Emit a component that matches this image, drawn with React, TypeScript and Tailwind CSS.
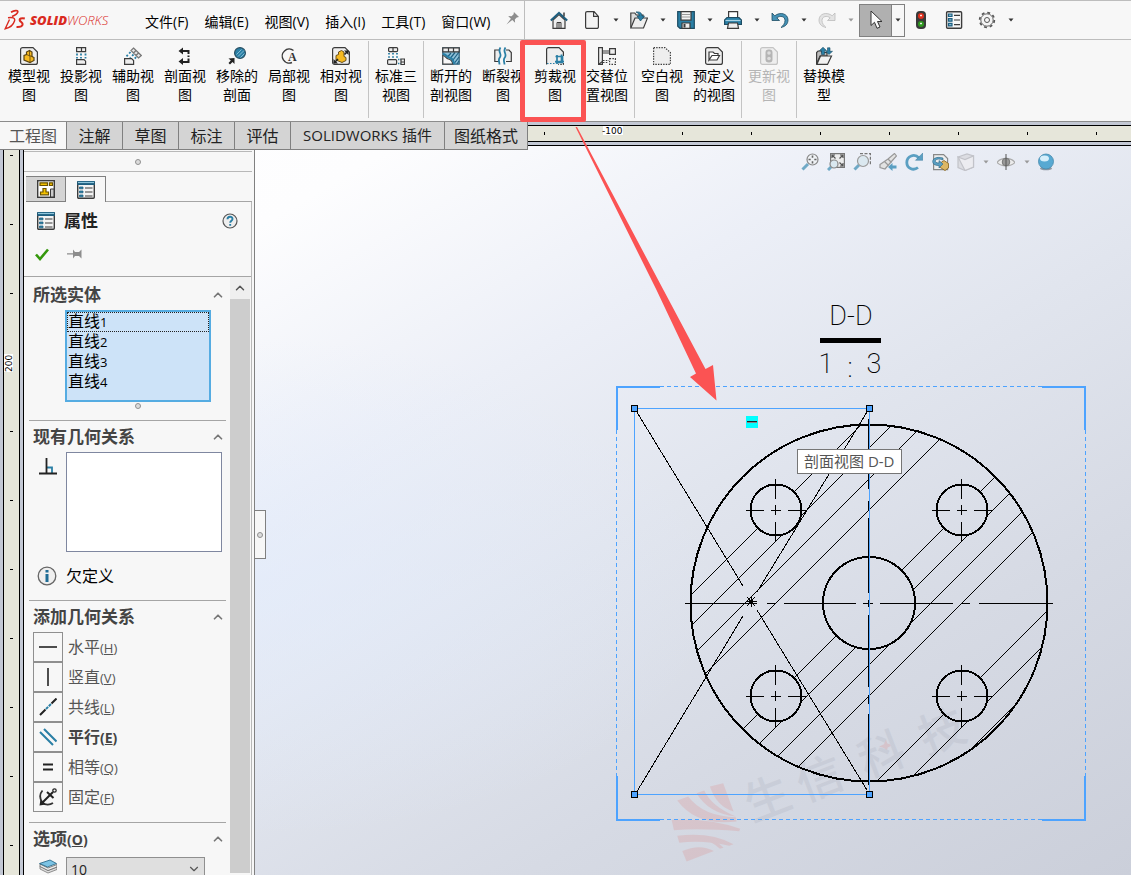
import { useState } from "react";
import type { ReactNode } from "react";
import clsx from "clsx";
import { ChevronUp, ChevronDown } from "lucide-react";

const DARK = "#3b3b3b";
const BLUE = "#2a7fa5";
const SELECT = "#4da3ff";

type IconProps = { children: ReactNode; size?: number };

function Icon({ children, size = 18 }: IconProps) {
  return (
    <svg
      width={size}
      height={size}
      viewBox="0 0 18 18"
      fill="none"
      stroke={DARK}
      strokeWidth="1.2"
      aria-hidden="true"
      className="shrink-0"
    >
      {children}
    </svg>
  );
}

const PAGE = "M.6 2.6a2 2 0 0 1 2-2H13l4.4 4.4v10.4a2 2 0 0 1-2 2H2.6a2 2 0 0 1-2-2z";
const PART = "M4 8.5V13l6 2.5 4-2v-3l-2-1V5L9.500 3.5 6.500 5v2.500z";

/* ---------- ribbon icons ---------- */

const ModelViewIcon = () => (
  <Icon>
    <path d={PAGE} fill="#eee" />
    <path d={PART} fill="#f5b921" stroke="#5b4310" />
    <path d="M9.500 3.500v5l3 1.200M6.500 7.500 10 9v6" stroke="#5b4310" strokeWidth=".8" />
  </Icon>
);

const ProjectedIcon = () => (
  <Icon>
    <path d="M4.600.6h9v4h-9zM9.500.6v4" fill="#eee" />
    <path d="M5 6.500v5M9 6.500v5M13.500 6.500v5" stroke={BLUE} strokeWidth="1.800" strokeDasharray="2 1.500" />
    <path d="M4.600 12.600h7.400l1.600 1.600v3.200h-9z" fill="#eee" />
  </Icon>
);

const AuxiliaryIcon = () => (
  <Icon>
    <path d="M9.500 1 17.300 8.500 14.500 11 7 3.500zM12 3.500 9.500 6M14.500 6 12 8.500" fill="#e6e6e6" stroke="#777" />
    <path d="M6.500 5 2 10M9.500 7.500 6 11M12 10l-1.500 2" stroke={BLUE} strokeWidth="1.800" strokeDasharray="2 2" />
    <path d="M.6 11.600h7l2 2v3.800h-9z" fill="#eee" />
  </Icon>
);

const SectionIcon = () => (
  <Icon>
    <path d="M5 4h7.500v3M12.500 8.500v1.500M12.500 11.500V15H5" stroke="#222" strokeWidth="2" />
    <path d="M7 .5V7.500L2.500 4zM7 11v7l-4.500-3.500z" fill="#222" stroke="none" />
  </Icon>
);

const RemovedSectionIcon = () => (
  <Icon>
    <circle cx="12" cy="6" r="5.400" fill={BLUE} stroke="#274d60" />
    <path d="m8.500 7.500 5-5M10 9.500l6-6M12.500 10.500l4-4" stroke="#9ccbe0" strokeWidth=".8" />
    <path d="M.5 11.500 6.500 11v6L4.500 15 2 17.500.5 16l2.300-2.500z" fill="#222" stroke="none" />
  </Icon>
);

const DetailIcon = () => (
  <Icon>
    <path d="M13.500 3.500A7 7 0 1 0 12 15.500" strokeWidth="1.400" />
    <text x="8" y="14" fontSize="12" fontFamily="Liberation Serif" fontWeight="700" fill="#333" stroke="none">A</text>
  </Icon>
);

const RelativeIcon = () => (
  <Icon>
    <path d={PAGE} fill="#eee" />
    <path d={PART} fill="#f5b921" stroke="#5b4310" strokeWidth=".9" />
    <path d="m2 16 4-4M12.500 7.500 16 4" stroke="#222" strokeWidth="1.500" />
    <path d="M1.500 12v4.500H6zM16.500 8V3.500H12z" fill="#222" stroke="none" />
  </Icon>
);

const StandardViewsIcon = () => (
  <Icon>
    <rect x="1.600" y=".6" width="9" height="4" rx="1" fill="#eee" />
    <path d="M6 .6v4" />
    <path d="M2 6v5M6 6v5M10 6v5" stroke={BLUE} strokeWidth="1.800" strokeDasharray="1.600 1.600" />
    <rect x=".6" y="12.600" width="9" height="4.800" rx="1" fill="#eee" />
    <path d="M11 12.500h3M11 16.500h3" stroke={BLUE} strokeWidth="1.600" strokeDasharray="1.400 1" />
    <path d="M14 12h3.500v5.500H14zM14 15h3.500" fill="#eee" />
  </Icon>
);

const BrokenOutIcon = () => (
  <Icon>
    <path d="M.8.8h16.400v16.400H.8z" fill="#8fc2da" stroke="#2b5f7a" />
    <path d="M9 6 6 9.500M13 5.500 8.500 11M17 5 11 13M17 10l-4.500 6M17 14l-2 3" stroke="#1f5f80" />
    <path d="M.8.8h16.400v4H.8zM6.500.8v4M11.500.8v4" fill="#eee" />
    <path d="M.8 8.500c3 0 3 3 5.500 3.500s4 1.500 4.500 5.200H.8z" fill="#f7f7f7" stroke="#444" />
    <path d="M1 7c3 0 3.500 3 6 3.500s4.500 2 5 6.500" stroke={BLUE} strokeWidth="2" />
  </Icon>
);

const BreakIcon = () => (
  <Icon>
    <path d="M5 3H.8v11.500H5M12 3h3l2.300 2.500v9H12" fill="#eee" />
    <path d="M6.500.5C3 5 9 7 5.500 11c-1.500 2.500 0 4 0 6.500M11.500.5C8 5 14 7 10.500 11c-1.500 2.500 0 4 0 6.500" stroke={BLUE} strokeWidth="1.800" />
  </Icon>
);

const CropIcon = () => (
  <Icon>
    <path d="M.6 17.400V2.600a2 2 0 0 1 2-2H13l4.400 4.400v12.400z" fill="#eee" stroke="none" />
    <path d="M.6 17.400V2.600a2 2 0 0 1 2-2H13l4.400 4.400v4" />
    <path d="M17.400 16v1.400H12" strokeDasharray="1.500 1.500" />
    <path d="M9.500 9.500h7v6h-7M11 8v9M15.500 7.500v7.500M9 14.500h9" stroke={BLUE} strokeWidth="1.700" />
    <path d="M1 16.500h8" stroke={BLUE} strokeDasharray="1.500 1.500" />
  </Icon>
);

const AlternateIcon = () => (
  <Icon>
    <path d="M.6.600h3.800v16.800H.6zM.6 17.400l3.800-3" fill="#eee" />
    <path d="M4.500 4h7M4.500 6h7" />
    <path d="M11.600 1.600h5.800v5.800h-5.800z" fill="#eee" />
    <path d="M5 13.500h6M11.600 11.600h5.800v5.800h-5.800zM5 15.500h5" strokeDasharray="1.500 1.300" />
  </Icon>
);

const EmptyViewIcon = () => (
  <Icon>
    <path d="M.6.600H12l5.400 5v11.800H.6z" fill="#eee" strokeDasharray="1.400 1.200" />
  </Icon>
);

const PredefinedIcon = () => (
  <Icon>
    <path d={PAGE} fill="#eee" />
    <path d="M4 13V5h4l1.500 1.500H13V8.500H7zM4 13l3-4.500h7.500L12 13z" fill="#fff" />
  </Icon>
);

const UpdateIcon = () => (
  <Icon>
    <path d={PAGE} fill="#eee" stroke="#c4c4c4" />
    <rect x="5.500" y="2.500" width="7" height="13" rx="3" fill="#b5b5b5" stroke="none" />
    <circle cx="9" cy="6" r="1.800" fill="#ddd" stroke="none" />
    <circle cx="9" cy="11.500" r="1.800" fill="#ddd" stroke="none" />
  </Icon>
);

const ReplaceIcon = () => (
  <Icon>
    <path d="M1.600 17V5.500l1.500-1.500h3l1 1.500H12V9H5z" fill="#bbb" />
    <path d="M1.800 17.400 5.500 9h11L12.500 17.400z" fill="#f2f2f2" />
    <path d="M6.500 7.500V3.500H4.500L8 .3l3.500 3.200H9.500v4zM12.500.8H15v3.500h2.500L14 7.500l-3.500-3.200h2z" fill={BLUE} stroke="#174a63" strokeWidth=".6" />
  </Icon>
);

type RibbonItem = { lines: [string, string]; icon: ReactNode; disabled?: boolean };

const RIBBON_GROUPS: RibbonItem[][] = [
  [
    { lines: ["模型视", "图"], icon: <ModelViewIcon /> },
    { lines: ["投影视", "图"], icon: <ProjectedIcon /> },
    { lines: ["辅助视", "图"], icon: <AuxiliaryIcon /> },
    { lines: ["剖面视", "图"], icon: <SectionIcon /> },
    { lines: ["移除的", "剖面"], icon: <RemovedSectionIcon /> },
    { lines: ["局部视", "图"], icon: <DetailIcon /> },
    { lines: ["相对视", "图"], icon: <RelativeIcon /> },
  ],
  [{ lines: ["标准三", "视图"], icon: <StandardViewsIcon /> }],
  [
    { lines: ["断开的", "剖视图"], icon: <BrokenOutIcon /> },
    { lines: ["断裂视", "图"], icon: <BreakIcon /> },
    { lines: ["剪裁视", "图"], icon: <CropIcon /> },
    { lines: ["交替位", "置视图"], icon: <AlternateIcon /> },
  ],
  [
    { lines: ["空白视", "图"], icon: <EmptyViewIcon /> },
    { lines: ["预定义", "的视图"], icon: <PredefinedIcon /> },
  ],
  [{ lines: ["更新视", "图"], icon: <UpdateIcon />, disabled: true }],
  [{ lines: ["替换模", "型"], icon: <ReplaceIcon /> }],
];

const MENUS = ["文件(F)", "编辑(E)", "视图(V)", "插入(I)", "工具(T)", "窗口(W)"];

const TABS = ["工程图", "注解", "草图", "标注", "评估", "SOLIDWORKS 插件", "图纸格式"];

/* ---------- top bar ---------- */

function Logo() {
  return (
    <div className="flex w-[145px] items-center gap-1 pl-1">
      <svg width="22" height="22" viewBox="0 0 22 22" fill="none" stroke="#da2a1f" aria-hidden="true">
        <path d="M7 3.200C10 1.500 14 .8 13.800 2.800c-.3 1.800-3 3.400-5.800 4.700" strokeWidth="1.700" />
        <path d="M4 8.800c4.500-.8 7.500 0 6.500 3.200-1 3.300-4.500 6.700-9.300 7.800L5.500 10.500" strokeWidth="1.400" />
        <path d="M20.800 9.500c-3.200-.8-5.800.2-5 2 .7 1.600 3.400 2.300 2.800 4.200-.6 1.800-2.800 2.400-6.100 2.200" strokeWidth="2" />
      </svg>
      <span className="text-[13px] leading-5 italic text-[#da2a1f]">
        <b className="font-extrabold">SOLID</b>
        <span className="font-light">WORKS</span>
      </span>
    </div>
  );
}

function Caret({ muted }: { muted?: boolean }) {
  return (
    <svg width="6" height="4" viewBox="0 0 6 4" aria-hidden="true">
      <path d="M.5.5h5L3 3.500z" fill={muted ? "#999" : "#333"} />
    </svg>
  );
}

const HomeIcon = () => (
  <Icon>
    <path d="M3 9v8.400h12V9L9 3.500z" fill="#eee" />
    <path d="M7 17v-5.500h4V17M9 11.500V17" strokeWidth="1" />
    <path d="M.8 9.500 9 1.800l8.200 7.700" stroke="#1e5f80" strokeWidth="2" />
    <path d="M14 1.500v4" strokeWidth="1.500" />
  </Icon>
);

const NewIcon = () => (
  <Icon>
    <path d="M2.600 2.100A1.500 1.500 0 0 1 4.100.6h7l4.300 4.800v10.500a1.500 1.500 0 0 1-1.500 1.500H4.100a1.500 1.500 0 0 1-1.500-1.500zM10.600.6v4.800h4.800" fill="#f2f2f2" />
  </Icon>
);

const OpenIcon = () => (
  <Icon>
    <path d="M.8 16.500V2h4l1.500 2H13v3" fill="#ddd" />
    <path d="M.8 17 5 7h12.500l-4 10z" fill="#eee" />
    <path d="M6 1c4-.5 6 1 6 4h2.500L10.500 10 7 5h2.300c0-2-1.300-3-3.300-4z" fill={BLUE} stroke="#174a63" strokeWidth=".7" />
  </Icon>
);

const SaveIcon = () => (
  <Icon>
    <path d="M.7.7h16.600v16.600H3l-2.300-2z" fill={BLUE} stroke="#1d4c63" />
    <path d="M4 .7h10v8.500H4z" fill="#f4f4f4" />
    <path d="M5 3.500h8M5 6h8" stroke="#999" />
    <path d="M5 12h8v5.300H5z" fill="#eee" />
    <path d="M7.500 13v3.500" strokeWidth="2" />
  </Icon>
);

const PrintIcon = () => (
  <Icon>
    <path d="M4.600 7V.6h9V7" fill="#fff" />
    <path d="M3 6.500h12l2.400 2.500v4.500H.6V9z" fill={BLUE} stroke="#1d4c63" />
    <path d="M1.500 9.500h15" stroke="#a9d4e6" />
    <path d="M4.500 12h9l1 5.400h-11z" fill="#eee" />
  </Icon>
);

const UNDO = "M1 2v7.500h7.500L5.800 6.800C9 4.500 14 5 14 9.500c0 3-1.800 5-4 7 4.500-1 7-3.500 7-7.500C17 2.500 9 .5 3.800 4.800z";

const UndoIcon = () => (
  <Icon>
    <path d={UNDO} fill="#4592b6" stroke="#1d4c63" strokeWidth=".8" />
  </Icon>
);

const RedoIcon = () => (
  <Icon>
    <g transform="matrix(-1 0 0 1 18 0)">
      <path d={UNDO} fill="#e3e3e3" stroke="#bbb" strokeWidth=".8" />
    </g>
  </Icon>
);

const FILE_TOOLS = [
  { name: "新建", icon: <NewIcon /> },
  { name: "打开", icon: <OpenIcon /> },
  { name: "保存", icon: <SaveIcon /> },
  { name: "打印", icon: <PrintIcon /> },
  { name: "撤消", icon: <UndoIcon /> },
  { name: "重做", icon: <RedoIcon />, disabled: true },
];

function TopBar() {
  return (
    <header className="flex h-10 items-stretch border-y border-[#bdbdbd] bg-[#f7f7f7]">
      <Logo />
      <nav className="flex items-center gap-4 pt-1">
        {MENUS.map((m) => (
          <button key={m} type="button" className="text-sm leading-5 text-black whitespace-nowrap">
            {m}
          </button>
        ))}
        <button type="button" aria-label="固定菜单" className="-mt-2">
          <svg width="13" height="13" viewBox="0 0 14 14" fill="#8d8d8d" aria-hidden="true">
            <path d="M8.500 0 14 5.500l-2.500.3L9.500 8l.3 3.500-3-2.800L.5 13.500l4.800-6.300-3-2.800L6 4.500l2.200-2z" />
          </svg>
        </button>
      </nav>
      <div className="ml-[5px] flex items-center border-l border-[#bdbdbd] pl-[19px]">
        <button type="button" aria-label="主页" className="mr-[3px] flex w-[30px] justify-center">
          <HomeIcon />
        </button>
        {FILE_TOOLS.map((t) => (
          <div key={t.name} className="flex w-[47px] items-center">
            <button type="button" aria-label={t.name} disabled={t.disabled} className="flex w-[30px] justify-center">
              {t.icon}
            </button>
            <button type="button" aria-label={`${t.name}选项`} disabled={t.disabled} className="flex w-[17px] justify-center">
              <Caret muted={t.disabled} />
            </button>
          </div>
        ))}
        <div className="flex h-[33px] border border-[#808080]">
          <button type="button" aria-label="选择" className="flex w-8 items-center justify-center border-r border-[#808080] bg-[#b0b0b0]">
            <svg width="16" height="20" viewBox="0 0 16 20" aria-hidden="true">
              <path d="M3 1v14.500l3.500-3.200 2.500 6 3-1.300-2.500-5.500H14z" fill="#fafafa" stroke="#333" />
            </svg>
          </button>
          <button type="button" aria-label="选择选项" className="flex w-3 items-center justify-center">
            <Caret />
          </button>
        </div>
        <button type="button" aria-label="重建模型" className="flex w-8 justify-center">
          <Icon>
            <rect x="4" y="0" width="10" height="18" rx="4" fill="#3a3a3a" stroke="none" />
            <circle cx="9" cy="5" r="3" fill="#e0301e" stroke="none" />
            <circle cx="9" cy="13" r="3" fill="#2f9a1f" stroke="none" />
            <path d="M8 4.500h2M9 3.500v2M8 12.500h2M9 11.500v2" stroke="#fff" strokeWidth=".8" />
          </Icon>
        </button>
        <button type="button" aria-label="文件属性" className="flex w-[34px] justify-center">
          <Icon>
            <rect x="1.600" y=".7" width="15" height="16.600" rx="1" fill="#f7f7f7" strokeWidth="1.400" />
            <path d="M3.500 3h3.500v2.500H3.500zM3.500 7.700h3.500v2.500H3.500zM3.500 12.400h3.500v2.500H3.500z" fill="#7fb8d2" stroke="#1e5f80" />
            <path d="M9 4.300h6M9 9h6M9 13.700h6" />
          </Icon>
        </button>
        <button type="button" aria-label="选项" className="flex w-8 justify-center">
          <Icon>
            <circle cx="9" cy="9" r="7.300" stroke="#555" strokeWidth="1.800" strokeDasharray="2.870 2.870" />
            <circle cx="9" cy="9" r="6.200" fill="#f4f4f4" stroke="#666" strokeWidth="1" />
            <circle cx="9" cy="9" r="2.500" fill="#f7f7f7" stroke="#555" strokeWidth="1" />
          </Icon>
        </button>
        <button type="button" aria-label="更多选项" className="flex w-4 justify-center">
          <Caret />
        </button>
      </div>
    </header>
  );
}

function Ribbon() {
  return (
    <div className="flex h-[82px] border-b border-[#8c8c8c] bg-[#f7f7f7] pl-[3px]">
      {RIBBON_GROUPS.map((group, gi) => (
        <div key={gi} className="flex">
          {gi > 0 && <div className="mx-px mt-px mb-[3px] w-px bg-[#c4c4c4]" />}
          {group.map((item) => (
            <button
              key={item.lines[0]}
              type="button"
              disabled={item.disabled}
              className={clsx(
                "flex w-[52px] flex-col items-center pt-[7px] text-sm leading-[19px] whitespace-nowrap",
                item.disabled ? "text-[#b5b5b5]" : "text-black"
              )}
            >
              {item.icon}
              <span className="mt-px">{item.lines[0]}</span>
              <span>{item.lines[1]}</span>
            </button>
          ))}
        </div>
      ))}
    </div>
  );
}

/* ---------- rulers and command tabs ---------- */

function TopRuler() {
  return (
    <div className="h-6 flex-1 overflow-hidden border-b border-black bg-[#c3c8d4] py-[3px]">
      <svg width="100%" height="17" className="block border-y border-black bg-[#e6e6da]">
        {Array.from({ length: 24 }, (_, i) => (
          <rect key={i} x={16 + i * 69} y="6" width="1" height="3" />
        ))}
        <rect x="75" y="0" width="20" height="9" fill="#fff" />
        <text x="74" y="8" fontSize="9" fontFamily="DejaVu Sans">-100</text>
      </svg>
    </div>
  );
}

function SideRuler() {
  return (
    <div className="flex w-6 shrink-0 border-r border-black bg-[#c3c8d4] px-[3px]">
      <svg width="17" height="100%" className="block border-x border-black bg-[#e6e6da]">
        {Array.from({ length: 24 }, (_, i) => (
          <rect key={i} x="6" y={5 + i * 69} width="3" height="1" />
        ))}
        <rect x="0" y="204" width="9" height="18" fill="#fff" />
        <text transform="translate(8 222) rotate(-90)" fontSize="9" fontFamily="DejaVu Sans">200</text>
      </svg>
    </div>
  );
}

function CommandTabs() {
  const [active, setActive] = useState(TABS[0]);
  return (
    <div className="flex shrink-0 items-start">
      <div role="tablist" className="flex">
        {TABS.map((t) => (
          <button
            key={t}
            type="button"
            role="tab"
            aria-selected={t === active}
            onClick={() => setActive(t)}
            className={clsx(
              "h-7 border-r border-b border-[#808080] whitespace-nowrap",
              t.startsWith("SOLID") ? "px-3 text-[15px]" : "text-base",
              t === active ? "w-[67px] bg-[#f7f7f7] text-[#555]" : "bg-[#d4d4d4] text-[#222]",
              t !== active && t.length === 2 && "w-14",
              t.length === 4 && "w-[83px]"
            )}
          >
            {t}
          </button>
        ))}
      </div>
      <TopRuler />
    </div>
  );
}

/* ---------- property panel ---------- */

const PropertyListIcon = () => (
  <Icon>
    <rect x=".7" y=".7" width="16.600" height="16.600" rx="1" fill="#f4f4f4" strokeWidth="1.400" />
    <path d="M.2 0h17.600v4H.2z" fill="#1e5f80" stroke="none" />
    <path d="M1 1.500h16" stroke="#8fc6dc" />
    <path d="M2.500 6h3.500v1.800H2.500zM2.500 10h3.500v1.800H2.500zM2.500 14h3.500v1.800H2.500z" fill={BLUE} stroke="#1e5f80" strokeWidth=".8" />
    <path d="M8 7h7.500M8 11h7.500M8 15h7.500" />
  </Icon>
);

const FeatureTreeIcon = () => (
  <Icon>
    <rect x=".7" y=".7" width="16.600" height="16.600" fill="#fff" strokeWidth="1.400" />
    <path d="M3 2.800h7.500v2.700H3zM12.500 2.800h3v2.700h-3zM6 8.500h3v3.500h2.500v2.800h-8V12H6z" fill="#f5c400" stroke="#6b5200" />
    <path d="M13.500 17V9H17v8z" fill="#ccc" strokeWidth="1" />
  </Icon>
);

function Grip() {
  return <span className="block size-[6px] rounded-full border border-[#909090] bg-[#dcdcdc]" />;
}

type SectionProps = { title: ReactNode; children: ReactNode };

function Section({ title, children }: SectionProps) {
  const [open, setOpen] = useState(true);
  return (
    <section className="border-b border-[#a5a5a5]">
      <button
        type="button"
        aria-expanded={open}
        onClick={() => setOpen(!open)}
        className="flex h-[31px] w-full items-center justify-between pr-px pl-1 text-[17px] font-bold text-[#444]"
      >
        <span>{title}</span>
        <ChevronUp size={14} color="#777" strokeWidth={3} className={clsx(!open && "rotate-180")} />
      </button>
      {open && children}
    </section>
  );
}

const ENTITIES = [1, 2, 3, 4];

const RELATIONS = [
  { label: "水平", key: "H", icon: <path d="M0 9h18" stroke="#222" strokeWidth="1.600" /> },
  { label: "竖直", key: "V", icon: <path d="M9 0v18" stroke="#222" strokeWidth="1.600" /> },
  {
    label: "共线",
    key: "L",
    icon: (
      <>
        <path d="m1 17 5.500-5.500M12.500 5.500 17.500.500" stroke="#222" strokeWidth="2" />
        <path d="m7 11 5-5" stroke={BLUE} strokeWidth="2" strokeDasharray="3 1" />
      </>
    ),
  },
  { label: "平行", key: "E", bold: true, icon: <path d="m1 4 13 13M5 1l12.500 12.500" stroke={BLUE} strokeWidth="2" /> },
  { label: "相等", key: "Q", icon: <path d="M4 6.500h10M4 11.500h10" stroke="#222" strokeWidth="1.800" /> },
  {
    label: "固定",
    key: "F",
    icon: (
      <>
        <path d="M3.500 2.500C.5 6 .5 10 3 14c3 3.500 8 3 11 1" stroke="#333" strokeWidth="1.800" />
        <path d="M3 15 14 4M8 4l6.500 6" stroke="#222" strokeWidth="2" />
        <circle cx="15.500" cy="2.500" r="1.700" stroke="#222" />
        <path d="M.5 17.500 1.500 11.500 7 16.500z" fill="#222" stroke="none" />
      </>
    ),
  },
];

function PropertyPanel() {
  return (
    <aside className="flex w-[231px] shrink-0 flex-col overflow-hidden border-r border-[#808080] bg-[#f7f7f7] pr-[2px]">
      <div className="mt-px flex h-[21px] shrink-0 items-center justify-center border-y border-[#b8b8b8]">
        <Grip />
      </div>
      <div role="tablist" className="mt-1 flex h-[26px] shrink-0 pl-[2px]">
        <button type="button" role="tab" aria-label="特征树" aria-selected="false" className="flex w-10 items-center justify-center border border-l-0 border-[#808080] bg-[#d4d4d4]">
          <FeatureTreeIcon />
        </button>
        <button type="button" role="tab" aria-label="属性" aria-selected="true" className="flex w-10 items-center justify-center border-t border-r border-[#808080]">
          <PropertyListIcon />
        </button>
        <div className="flex-1 border-b border-[#a5a5a5]" />
      </div>
      <div className="flex min-h-0 flex-1 flex-col border-r border-[#b8b8b8]">
        <div className="h-[75px] shrink-0 border-b border-[#a5a5a5] pl-[13px]">
          <div className="flex h-[38px] items-center">
            <PropertyListIcon />
            <h2 className="ml-[9px] text-[17px] font-bold text-[#222]">属性</h2>
            <button type="button" aria-label="帮助" className="mr-[13px] ml-auto">
              <svg width="16" height="16" viewBox="0 0 16 16" className="block" aria-hidden="true">
                <circle cx="8" cy="8" r="7" fill="#eee" stroke="#555" strokeWidth="1.200" />
                <path d="M5.500 6.200c0-3.200 5-3.200 5-.2 0 1.700-2.300 1.800-2.300 3.800M8.200 11v1.700" fill="none" stroke={BLUE} strokeWidth="1.900" />
              </svg>
            </button>
          </div>
          <div className="-ml-px flex h-7 items-center">
            <button type="button" aria-label="确定">
              <svg width="14" height="13" viewBox="0 0 14 13" className="block -ml-px" aria-hidden="true">
                <path d="M1 6.500 5 11 13 1.500" fill="none" stroke="#35980c" strokeWidth="2.600" />
              </svg>
            </button>
            <button type="button" aria-label="保持可见" className="ml-[18px]">
              <svg width="15" height="10" viewBox="0 0 15 10" fill="#8d8d8d" className="block" aria-hidden="true">
                <path d="M0 4.300h6V.5l2 2.500h4L14.500.500v9L12 7H8L6 9.500V5.600H0z" />
              </svg>
            </button>
          </div>
        </div>

        <div className="flex min-h-0 flex-1">
          <div className="min-w-0 flex-1 overflow-hidden pt-[2px] pr-1 pl-[5px]">
            <Section title="所选实体">
              <ul role="listbox" aria-label="所选实体" className="mr-[15px] ml-9 h-[92px] border-2 border-[#55ace2] bg-[#cde3f8] text-base text-black">
                {ENTITIES.map((n) => (
                  <li
                    key={n}
                    role="option"
                    aria-selected={n === 1}
                    className={clsx("h-5 border", n === 1 ? "border-dotted border-[#222]" : "border-transparent")}
                  >
                    <span className="block leading-[17px]">
                      直线<span className="text-[13px]">{n}</span>
                    </span>
                  </li>
                ))}
              </ul>
              <div className="mr-[15px] ml-9 flex h-[18px] justify-center pt-px">
                <Grip />
              </div>
            </Section>

            <Section title="现有几何关系">
              <div className="flex items-start">
                <span className="mt-[6px] ml-[10px] w-[27px]">
                  <Icon>
                    <path d="M8 9.500h5V15" stroke={BLUE} strokeWidth="1.800" />
                    <path d="M0 15.500h18M7.500 0v15" stroke="#222" strokeWidth="1.800" />
                  </Icon>
                </span>
                <ul role="listbox" aria-label="现有几何关系" className="mr-1 h-[100px] flex-1 border border-[#7f87a0] bg-white" />
              </div>
              <div className="flex h-12 items-center pl-2">
                <svg width="20" height="20" viewBox="0 0 20 20" aria-hidden="true">
                  <circle cx="10" cy="10" r="8.800" fill="#efefef" stroke="#666" strokeWidth="1.300" />
                  <path d="M10 4v2.500M10 8v8" stroke="#1e6c95" strokeWidth="3" />
                </svg>
                <span className="ml-[9px] text-base text-black">欠定义</span>
              </div>
            </Section>

            <Section title="添加几何关系">
              <div className="flex flex-col pb-[10px] pl-1">
                {RELATIONS.map((r) => (
                  <button key={r.key} type="button" className="flex h-[30px] items-center text-base text-[#555]">
                    <span className="flex size-[30px] items-center justify-center border border-[#8f8f8f]">
                      <Icon>{r.icon}</Icon>
                    </span>
                    <span className={clsx("ml-[5px]", r.bold && "font-bold text-[#444]")}>
                      {r.label}
                      <span className={r.bold ? "text-sm" : "text-[13px]"}>
                        (<u>{r.key}</u>)
                      </span>
                    </span>
                  </button>
                ))}
              </div>
            </Section>

            <Section
              title={
                <>
                  选项<span className="text-sm">(<u>O</u>)</span>
                </>
              }
            >
              <label className="flex items-start pt-[3px] pb-3 pl-[10px]">
                <Icon>
                  <path d="M1 9 9 13.500l9-3.500v2.500L9 16 1 12z" fill="#ddd" stroke="#777" strokeWidth=".8" />
                  <path d="M1 7 9 11l9-3.500V10L9 13.500 1 9.500z" fill="#eee" stroke="#666" strokeWidth=".8" />
                  <path d="M.5 6.500 11 3l6.500 3.500L8.500 10z" fill="#7cc3e4" stroke="#1e5f80" strokeWidth=".8" />
                </Icon>
                <span className="relative ml-[9px] block">
                  <select aria-label="图层" className="block h-[25px] w-[139px] appearance-none border border-[#8f8f8f] bg-[#dfdfdf] pl-1 text-sm leading-6 text-[#222]">
                    <option>10</option>
                  </select>
                  <ChevronDown size={14} color="#555" className="pointer-events-none absolute top-[5px] right-1" />
                </span>
              </label>
            </Section>
          </div>
          <div className="mr-px flex w-5 shrink-0 flex-col pb-[2px]">
            <button type="button" aria-label="向上滚动" className="flex h-[22px] items-center justify-center bg-[#efefef]">
              <ChevronUp size={14} color="#555" strokeWidth={2.5} />
            </button>
            <div className="flex-1 bg-[#cdcdcd]" />
          </div>
        </div>
      </div>
    </aside>
  );
}

/* ---------- drawing ---------- */

const HOLES = [
  { x: 775.5, y: 510 },
  { x: 961.5, y: 510 },
  { x: 775.5, y: 696 },
  { x: 961.5, y: 696 },
];

// x + y of every 45° hatch line
const HATCH = [1286, 1317, 1348, 1379, 1472, 1503, 1534, 1565, 1658, 1689, 1720];

const ring = (x: number, y: number, r: number) =>
  `M${x - r} ${y}a${r} ${r} 0 1 0 ${2 * r} 0a${r} ${r} 0 1 0 ${-2 * r} 0z`;

const SECTION_AREA =
  ring(869, 603, 178) + ring(869, 603, 46) + HOLES.map((h) => ring(h.x, h.y, 25)).join("");

const HANDLES = [
  [634, 408],
  [869, 408],
  [634, 794],
  [869, 794],
];

function Drawing() {
  return (
    <svg
      width="876"
      height="725"
      viewBox="255 150 876 725"
      className="absolute top-0 left-0"
      fill="none"
      role="img"
      aria-label="剖面视图 D-D"
    >
      <defs>
        <clipPath id="section-area">
          <path d={SECTION_AREA} clipRule="evenodd" />
        </clipPath>
      </defs>

      {/* title block */}
      <g fill="#000" fontFamily="Roboto" fontWeight="200" fontSize="27" textAnchor="middle">
        <text x="851" y="325">D-D</text>
        <text x="826" y="373">1</text>
        <text x="850" y="377">:</text>
        <text x="874" y="373">3</text>
      </g>
      <path d="M820 340.500h61" stroke="#000" strokeWidth="5" />

      {/* watermark */}
      <g opacity=".12">
        <g transform="translate(600 640) scale(.333)" fill="#e83e30">
          <path d="M232 482 265 470Q310 530 408 532L410 545Q290 560 232 482z" />
          <path d="M290 460 313 452Q335 500 408 530 325 520 290 460z" />
          <path d="M330 440 370 430 401 515Q350 500 330 440z" />
          <path d="M215 540Q330 535 421 567L418 574Q300 565 222 571z" />
          <path d="M232 588Q330 575 401 613L388 618Q310 600 238 609z" />
          <path d="M285 588Q340 590 371 624L360 627Q330 600 285 588z" />
          <path d="M247 634Q300 610 342 634L260 665z" />
          <path d="m858 296 5 15 17 4-16 8-4 17-6-15-16-5 15-7z" />
        </g>
        <text
          transform="translate(752 822) rotate(-21)"
          x="0 56 122 187"
          fontSize="46"
          fontWeight="500"
          fontFamily="Noto Sans CJK SC"
          fill="#7c8494"
        >
          生信科技
        </text>
      </g>

      <g shapeRendering="crispEdges" stroke="#000">
        <g clipPath="url(#section-area)">
          {HATCH.map((c) => (
            <path key={c} d={`M680 ${c - 680}L1060 ${c - 1060}`} />
          ))}
        </g>
        <circle cx="869" cy="603" r="178.500" strokeWidth="2" />
        <circle cx="869" cy="603" r="46" strokeWidth="2" />
        {HOLES.map((h) => (
          <g key={`${h.x}-${h.y}`}>
            <circle cx={h.x + 0.5} cy={h.y} r="25.500" strokeWidth="2" />
            <path
              d={`M${h.x - 30} ${h.y + 0.5}h18m7 0h10m7 0h19M${h.x} ${h.y - 31}v20m0 6v10m0 7v19`}
            />
          </g>
        ))}
        <path d="M685 603.500h72m10 0h8m9 0h72m7 0h10m7 0h73m8 0h9m9 0h74" />
        <path d="M868.500 419v70m0 12v9m0 8v75m0 7v7m0 8v72m0 8v9m0 10v71" />

        {/* crossed edges of the sketch rectangle */}
        <path d="M635 409 743 586M757 610 867 790M867 412 757 592M743 616 636 793" />
        <path d="M751.500 596v11M746 601.500h11M747 597l8 9M755 597l-8 9" />
      </g>

      <g shapeRendering="crispEdges" stroke={SELECT}>
        <rect x="634.500" y="408.500" width="235" height="386" />
        <path d="M660 386.500h382M660 819.500h382M616.500 430v346M1085.500 430v346" strokeDasharray="4 3" />
        <path d="M660 387h-43v43M1042 387h43v43M617 776v44h43M1085 776v44h-43" strokeWidth="2" />
        {HANDLES.map(([x, y]) => (
          <rect key={`${x}-${y}`} x={x - 2.5} y={y - 2.5} width="6" height="6" fill={SELECT} stroke="#000" />
        ))}
      </g>

      <rect x="746" y="416" width="12" height="12" fill="#0ff" />
      <path d="M747 421.500h10" stroke="#222" />
      <path d="M747 422.500h10" stroke="#888" />
    </svg>
  );
}

/* ---------- heads-up view toolbar ---------- */

const LENS = (
  <>
    <path d="M7 11 1.500 16.500" stroke="#6fa9c6" strokeWidth="3" />
    <circle cx="11.500" cy="6.500" r="5.500" fill="#eef1f4" stroke="#888" strokeWidth="1.200" />
  </>
);

const VIEW_TOOLS = [
  {
    name: "整屏显示全图",
    icon: (
      <>
        {LENS}
        <path d="M11.500 2.500v2.200M11.500 8.300v2.200M7.500 6.500h2.200M13.300 6.500h2.200" stroke="#666" strokeWidth="1.600" />
      </>
    ),
  },
  {
    name: "局部放大",
    icon: (
      <>
        <path d="M3.600.6h13.800v13.800H3.600z" fill="#ececec" stroke="#777" />
        <path d="m8.500 5.500-3-3M12.500 5.500l3-3M12.500 9.500l3 3M5 5V2h3M13 2h3v3M16 10v3h-3" stroke="#555" strokeWidth="1.200" />
        <path d="m5 13-4 4" stroke="#6fa9c6" strokeWidth="3" />
        <circle cx="7" cy="11" r="4" fill="#d9e8f0" stroke="#888" />
      </>
    ),
  },
  {
    name: "放大选取范围",
    icon: (
      <>
        <path d="M7 .6h10.400v11" stroke="#777" strokeDasharray="3 1.500" />
        <path d="M6 12 1.500 16.500" stroke="#6fa9c6" strokeWidth="3" />
        <circle cx="10" cy="8" r="5.500" fill="#dbe8f0" stroke="#999" />
      </>
    ),
  },
  {
    name: "上一视图",
    icon: (
      <>
        <path d="M1 11.500 9 6l6.500-5.500 2 2.500L12 9l-6 7-5-1.500z" fill="#e2e2e2" stroke="#999" />
        <path d="m5.500 8.500 4 4M9 6l3.500 3.500" stroke="#999" />
        <path d="M17.500 12.500h-4V10L9 14l4.500 4v-2.500h4z" fill="#5b9fc2" stroke="none" />
      </>
    ),
  },
  {
    name: "旋转视图",
    icon: (
      <>
        <path d="M13 14.500C8 18.500 1.800 15 1.800 9.500 1.800 3 9.500 0 14 5" stroke="#5b9fc2" strokeWidth="2.800" />
        <path d="M10.500 7.300H17.800V0z" fill="#5b9fc2" stroke="#3c7c9e" strokeWidth=".5" />
      </>
    ),
  },
  {
    name: "3D 工程图视图",
    icon: (
      <>
        <path d="M2.600 1.600h10l4 4v11h-14z" fill="#eee" stroke="#888" />
        <path d="M8.500 10.500 13 7.500l4.500 3V15L14 17.500 8.500 14z" fill="#dcb765" stroke="#85621a" strokeWidth=".8" />
        <path d="M12 5C5 3 .5 6 2 10c1 2 3 2.500 6 2.500V15l4-4-4-3.500V10c-3 0-4-1-3.500-2.500C5.500 6 8 5.500 12 7z" fill="#5b9fc2" stroke="#2b6585" strokeWidth=".6" />
      </>
    ),
  },
];

function ViewToolbar() {
  return (
    <div className="absolute top-[3px] right-[72px] flex h-[18px] items-center">
      {VIEW_TOOLS.map((t) => (
        <button key={t.name} type="button" aria-label={t.name} className="flex w-[26px] justify-center">
          <Icon>{t.icon}</Icon>
        </button>
      ))}
      <button type="button" aria-label="显示样式" className="flex w-[26px] justify-center">
        <Icon>
          <path d="M1 4 10 1l6.500 2v11L8 17.500 1 14.500z" fill="#dcdde2" stroke="#c2c3c9" />
          <path d="m1 4 7 2.500 8.500-3.500v11L8 17.500z" fill="#ececf0" stroke="#c2c3c9" />
        </Icon>
      </button>
      <button type="button" aria-label="显示样式选项" className="flex w-[13px] justify-center">
        <Caret muted />
      </button>
      <button type="button" aria-label="隐藏/显示项目" className="flex w-[28px] justify-center">
        <Icon>
          <path d="M0 9.500C4 4 14 4 18 9.500 14 14 4 14 0 9.500z" fill="#ececec" stroke="#aaa" />
          <circle cx="9" cy="9" r="3.800" fill="#999" stroke="#777" strokeWidth="1" />
          <path d="M9 1v16" stroke="#555" strokeWidth="1" />
        </Icon>
      </button>
      <button type="button" aria-label="隐藏/显示选项" className="flex w-[13px] justify-center">
        <Caret muted />
      </button>
      <button type="button" aria-label="应用布景" className="flex w-[26px] justify-center">
        <Icon>
          <ellipse cx="9" cy="15.500" rx="6" ry="1.800" fill="#8f98a3" stroke="none" />
          <circle cx="9" cy="8.500" r="7.500" fill="#58a9d2" stroke="#4488ab" strokeWidth=".8" />
          <ellipse cx="7.500" cy="5.500" rx="4.500" ry="3" fill="#d5eefa" stroke="none" />
        </Icon>
      </button>
    </div>
  );
}

function Canvas() {
  return (
    <main className="relative min-w-0 flex-1 overflow-hidden">
      <Drawing />
      <ViewToolbar />
      <button
        type="button"
        aria-label="折叠面板"
        className="absolute top-[360px] left-0 flex h-[49px] w-[11px] items-center justify-center border border-l-0 border-[#808080] bg-[#f7f7f7]"
      >
        <Grip />
      </button>
      <div role="tooltip" className="absolute top-[299px] left-[542px] border border-[#767676] bg-white px-[6px] text-[15px] leading-[23px] whitespace-nowrap text-[#555]">
        剖面视图 D-D
      </div>
    </main>
  );
}

function Callout() {
  return (
    <>
      <div className="pointer-events-none absolute top-10 left-[520px] h-[82px] w-[66px] rounded-[2px] border-[5px] border-[#fb5353]" />
      <svg
        width="160"
        height="290"
        viewBox="565 120 160 290"
        className="pointer-events-none absolute top-[120px] left-[565px]"
        aria-hidden="true"
      >
        <path d="M575.500 127 577 127 663.500 290 705.500 369 713 365 716.500 400.500 690 377 696 373.500 656.500 290z" fill="#fb5353" />
      </svg>
    </>
  );
}

export default function App() {
  return (
    <div className="relative flex h-screen flex-col overflow-hidden [font-family:'Open_Sans','Noto_Sans_CJK_SC',sans-serif]">
      <TopBar />
      <Ribbon />
      <div className="flex min-h-0 flex-1 flex-col bg-[radial-gradient(ellipse_at_22%_62%,rgba(226,236,253,0.6)_0%,rgba(226,236,253,0)_38%),linear-gradient(150deg,#ffffff_0%,#fdfdfe_18%,#eceff7_38%,#e1e5ee_55%,#d6dae4_75%,#cbcfda_100%)]">
        <CommandTabs />
        <div className="flex min-h-0 flex-1">
          <SideRuler />
          <PropertyPanel />
          <Canvas />
        </div>
      </div>
      <Callout />
    </div>
  );
}
